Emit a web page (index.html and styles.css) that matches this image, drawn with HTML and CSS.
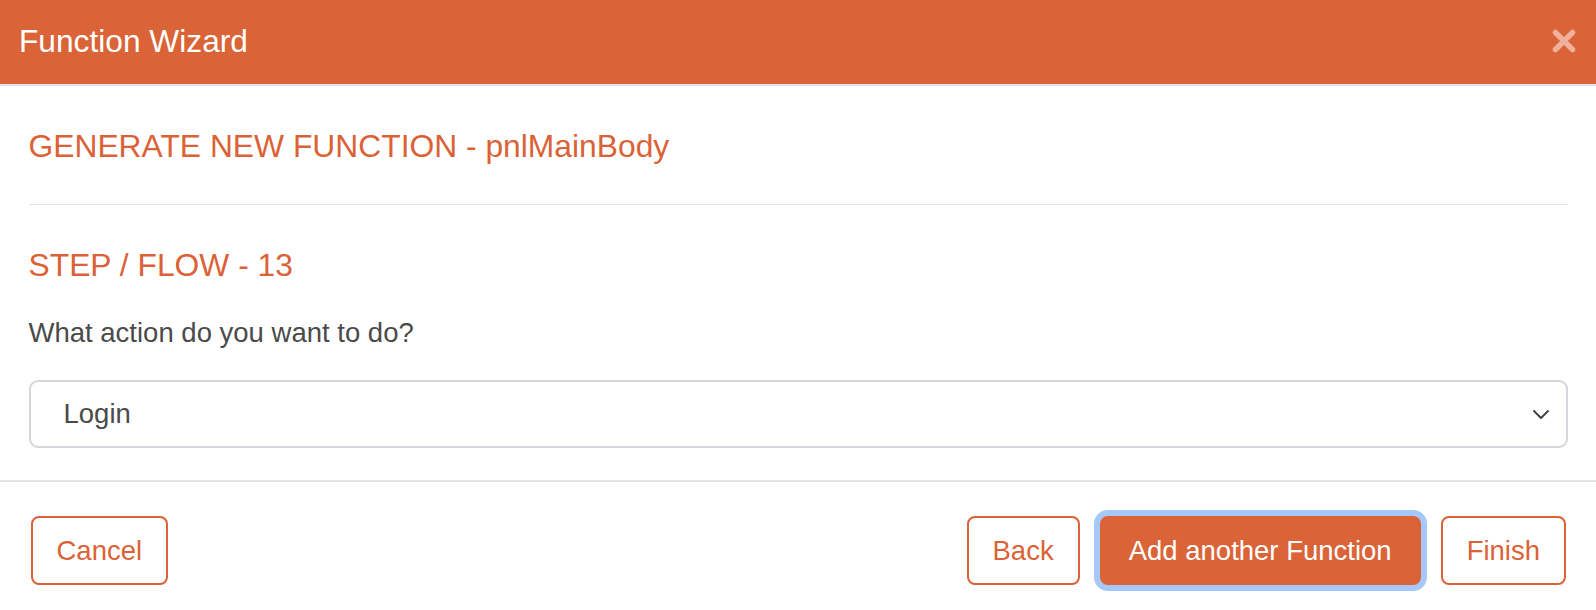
FILE: index.html
```html
<!DOCTYPE html>
<html lang="en">
<head>
<meta charset="utf-8">
<title>Function Wizard</title>
<link rel="stylesheet" href="styles.css">
</head>
<body>
<div class="modal">
  <header class="modal-header">
    <h1 class="modal-title">Function Wizard</h1>
    <button class="close" aria-label="Close">
      <svg width="24" height="24" viewBox="0 0 24 24"><path d="M3.5 3.5 L20.5 20.5 M20.5 3.5 L3.5 20.5" stroke="#efb19b" stroke-width="5.5" stroke-linecap="round"/></svg>
    </button>
  </header>
  <main class="modal-body">
    <h2 class="heading">GENERATE NEW FUNCTION - pnlMainBody</h2>
    <hr class="divider">
    <h2 class="heading step">STEP / FLOW - 13</h2>
    <label class="question" for="action">What action do you want to do?</label>
    <div class="select">
      <span class="select-value">Login</span>
      <svg class="chevron" width="18" height="12" viewBox="0 0 18 12"><path d="M2 3 L9 10 L16 3" fill="none" stroke="#444" stroke-width="2" stroke-linecap="round" stroke-linejoin="round"/></svg>
    </div>
  </main>
  <footer class="modal-footer">
    <button class="btn btn-outline">Cancel</button>
    <div class="spacer"></div>
    <button class="btn btn-outline">Back</button>
    <button class="btn btn-primary">Add another Function</button>
    <button class="btn btn-outline">Finish</button>
  </footer>
</div>
</body>
</html>
```
FILE: styles.css
```css
* { box-sizing: border-box; }
html, body {
  margin: 0;
  padding: 0;
  background: #fff;
  font-family: "Liberation Sans", Arial, Helvetica, sans-serif;
}
.modal {
  width: 1596px;
  height: 610px;
  display: flex;
  flex-direction: column;
  overflow: hidden;
}
.modal-header {
  height: 86px;
  flex: none;
  background: #da6437;
  border-bottom: 2px solid #dee2e6;
  display: flex;
  align-items: center;
  justify-content: space-between;
  padding: 0 20px 2px 19px;
}
.modal-title {
  margin: 0;
  color: #fff;
  font-weight: normal;
  font-size: 31.7px;
  line-height: 38px;
}
.close {
  border: 0;
  background: none;
  padding: 0;
  width: 24px;
  height: 24px;
  display: flex;
}
.modal-body {
  padding: 41px 28.5px 0 28.5px;
  display: flex;
  flex-direction: column;
}
.heading {
  margin: 0;
  color: #db6236;
  font-weight: normal;
  font-size: 31.8px;
  line-height: 38px;
}
.divider {
  margin: 39px 0 0 0;
  border: 0;
  border-top: 1px solid #e3e3e3;
  height: 0;
}
.step {
  margin-top: 41px;
}
.question {
  margin-top: 28px;
  color: #4a4a4a;
  font-size: 27.5px;
  line-height: 41px;
}
.select {
  margin-top: 27px;
  height: 68px;
  border: 2px solid #d3d6da;
  border-radius: 9px;
  display: flex;
  align-items: center;
  justify-content: space-between;
  padding: 0 16px 0 33px;
}
.select-value {
  color: #4a4a4a;
  font-size: 27.5px;
}
.chevron { display: block; }
.modal-footer {
  margin-top: auto;
  border-top: 2px solid #e2e4e7;
  height: 130px;
  display: flex;
  align-items: flex-start;
  gap: 20px;
  padding: 34px 30px 0 30.5px;
}
.spacer { flex: 1; }
.btn {
  height: 69px;
  border-radius: 8px;
  border: 2px solid #db6236;
  padding: 0 24px;
  font-family: inherit;
  font-size: 27.5px;
  background: #fff;
  color: #db6236;
}
.btn-primary {
  background: #da6437;
  color: #fff;
  padding: 0 27px;
  box-shadow: 0 0 0 6px #a6c8f8;
}
```
